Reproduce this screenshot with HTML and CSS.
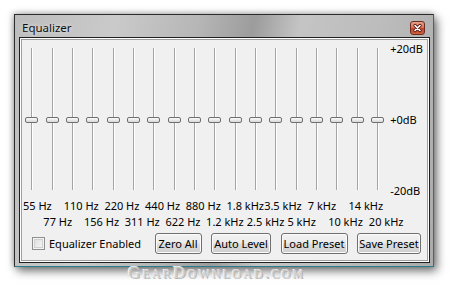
FILE: index.html
```html
<!DOCTYPE html>
<html>
<head>
<meta charset="utf-8">
<link rel="stylesheet" href="styles.css">
</head>
<body>
<div class="stage">
  <div class="window">
    <div class="titlebar">
      <span class="title">Equalizer</span>
      <span class="close">
        <svg width="13" height="12" viewBox="0 0 13 12">
          <path d="M4 3.5 L9 8.5 M9 3.5 L4 8.5" stroke="#5a1a10" stroke-width="3.2" stroke-linecap="round"/>
          <path d="M4 3.5 L9 8.5 M9 3.5 L4 8.5" stroke="#ffffff" stroke-width="1.6" stroke-linecap="round"/>
        </svg>
      </span>
    </div>
    <div class="client">
      <div class="eq">
        <div class="slider"><i class="track"></i><b class="thumb"></b></div>
        <div class="slider"><i class="track"></i><b class="thumb"></b></div>
        <div class="slider"><i class="track"></i><b class="thumb"></b></div>
        <div class="slider"><i class="track"></i><b class="thumb"></b></div>
        <div class="slider"><i class="track"></i><b class="thumb"></b></div>
        <div class="slider"><i class="track"></i><b class="thumb"></b></div>
        <div class="slider"><i class="track"></i><b class="thumb"></b></div>
        <div class="slider"><i class="track"></i><b class="thumb"></b></div>
        <div class="slider"><i class="track"></i><b class="thumb"></b></div>
        <div class="slider"><i class="track"></i><b class="thumb"></b></div>
        <div class="slider"><i class="track"></i><b class="thumb"></b></div>
        <div class="slider"><i class="track"></i><b class="thumb"></b></div>
        <div class="slider"><i class="track"></i><b class="thumb"></b></div>
        <div class="slider"><i class="track"></i><b class="thumb"></b></div>
        <div class="slider"><i class="track"></i><b class="thumb"></b></div>
        <div class="slider"><i class="track"></i><b class="thumb"></b></div>
        <div class="slider"><i class="track"></i><b class="thumb"></b></div>
        <div class="slider"><i class="track"></i><b class="thumb"></b></div>
        <div class="db">
          <span>+20dB</span>
          <span>+0dB</span>
          <span>-20dB</span>
        </div>
      </div>
      <div class="freqs">
        <span class="f c1">55 Hz</span>
        <span class="f c3">110 Hz</span>
        <span class="f c5">220 Hz</span>
        <span class="f c7">440 Hz</span>
        <span class="f c9">880 Hz</span>
        <span class="f c11">1.8 kHz</span>
        <span class="f c13 tight">3.5 kHz</span>
        <span class="f c15">7 kHz</span>
        <span class="f c17">14 kHz</span>
      </div>
      <div class="freqs">
        <span class="f c2">77 Hz</span>
        <span class="f c4">156 Hz</span>
        <span class="f c6">311 Hz</span>
        <span class="f c8">622 Hz</span>
        <span class="f c10">1.2 kHz</span>
        <span class="f c12">2.5 kHz</span>
        <span class="f c14">5 kHz</span>
        <span class="f c16">10 kHz</span>
        <span class="f c18">20 kHz</span>
      </div>
      <div class="controls">
        <label class="check"><span class="box"></span>Equalizer Enabled</label>
        <div class="buttons">
          <button class="btn w47">Zero All</button>
          <button class="btn w60">Auto Level</button>
          <button class="btn w67">Load Preset</button>
          <button class="btn w64">Save Preset</button>
        </div>
      </div>
    </div>
  </div>
  <div class="watermark">GearDownload.com</div>
</div>
</body>
</html>
```

FILE: styles.css
```css
html, body {
  margin: 0;
  padding: 0;
  background: #ffffff;
}
body {
  width: 452px;
  height: 286px;
  overflow: hidden;
  font-family: "Noto Sans", "Open Sans", sans-serif;
  font-size: 11px;
  color: #000;
}
.stage {
  position: relative;
  padding: 14px 0 0 14px;
  height: 272px;
}
.window {
  box-sizing: border-box;
  width: 420px;
  height: 253px;
  border: 1px solid #2c2c2c;
  border-right-color: #2d6f7c;
  border-bottom-color: #2a7d8c;
  background: linear-gradient(100deg, #bdbdbd 0%, #cacaca 22%, #b6b6b6 40%, #9c9c9c 52%, #c4c4c4 62%, #bcbcbc 80%, #ababab 100%);
  box-shadow: 3px 4px 9px rgba(0, 0, 0, 0.55), -1px -1px 6px rgba(0, 0, 0, 0.25);
  display: flex;
  flex-direction: column;
  padding: 0 3px 3px 4px;
}
.titlebar {
  height: 22px;
  display: flex;
  align-items: center;
  justify-content: space-between;
  padding: 0 5px 0 3px;
}
.title {
  font-size: 11.5px;
  color: #111;
  text-shadow: 0 0 4px rgba(255, 255, 255, 0.8);
  padding-top: 2px;
}
.close {
  box-sizing: border-box;
  width: 15px;
  height: 14px;
  margin-top: 3px;
  border: 1px solid #6e2a1e;
  border-radius: 3px;
  background: linear-gradient(#e8a08a 0%, #d6755c 45%, #c2452a 55%, #d0613f 100%);
  display: flex;
  align-items: center;
  justify-content: center;
}
.client {
  flex: 1;
  border: 1px solid #1f1f1f;
  box-shadow: inset 0 0 0 1px #ffffff, inset 0 0 0 2px #a0a0a0;
  background: #f0f0f0;
  padding: 4px 8px 0 2px;
}
.eq {
  display: grid;
  grid-template-columns: repeat(18, 20.35px) 1fr;
  height: 156px;
}
.slider {
  position: relative;
}
.track {
  display: block;
  box-sizing: border-box;
  width: 2px;
  height: 142px;
  margin: 6px auto 0;
  border-left: 1px solid #a4a4a4;
  border-right: 1px solid #ffffff;
}
.thumb {
  position: absolute;
  left: 50%;
  top: 75px;
  margin-left: -7px;
  box-sizing: border-box;
  width: 13px;
  height: 6px;
  border: 1px solid #6f6f6f;
  border-radius: 2px;
  background: linear-gradient(#fbfbfb, #d8d8d8);
}
.db {
  display: flex;
  flex-direction: column;
  justify-content: space-between;
  line-height: 14px;
  padding-left: 2px;
  white-space: nowrap;
}
.freqs {
  display: grid;
  grid-template-columns: repeat(18, 20.35px);
  height: 16px;
  line-height: 16px;
}
.f {
  white-space: nowrap;
  padding-left: 1px;
  grid-row: 1;
}
.tight {
  margin-left: -3px;
}
.c1 { grid-column: 1 / span 2; }
.c2 { grid-column: 2 / span 2; }
.c3 { grid-column: 3 / span 2; }
.c4 { grid-column: 4 / span 2; }
.c5 { grid-column: 5 / span 2; }
.c6 { grid-column: 6 / span 2; }
.c7 { grid-column: 7 / span 2; }
.c8 { grid-column: 8 / span 2; }
.c9 { grid-column: 9 / span 2; }
.c10 { grid-column: 10 / span 2; }
.c11 { grid-column: 11 / span 2; }
.c12 { grid-column: 12 / span 2; }
.c13 { grid-column: 13 / span 2; }
.c14 { grid-column: 14 / span 2; }
.c15 { grid-column: 15 / span 2; }
.c16 { grid-column: 16 / span 2; }
.c17 { grid-column: 17 / span 2; }
.c18 { grid-column: 18 / span 1; }
.controls {
  display: flex;
  align-items: center;
  height: 21px;
  margin-top: 3px;
}
.check {
  display: flex;
  align-items: center;
  gap: 4px;
  padding-left: 10px;
}
.box {
  box-sizing: border-box;
  width: 13px;
  height: 13px;
  border: 1px solid #8f8f8f;
  background: linear-gradient(135deg, #dcdcdc, #f8f8f8);
  box-shadow: inset 0 0 0 1px #f4f4f4, inset 0 0 0 2px #d0d0d0;
}
.buttons {
  margin-left: auto;
  display: flex;
  gap: 9.5px;
}
.btn {
  box-sizing: border-box;
  height: 21px;
  padding: 0;
  white-space: nowrap;
  font-family: inherit;
  font-size: 11px;
  color: #000;
  border: 1px solid #707070;
  border-radius: 3px;
  background: linear-gradient(#f2f2f2 0%, #ebebeb 48%, #dddddd 52%, #cfcfcf 100%);
  box-shadow: inset 0 0 0 1px #fbfbfb;
}
.w47 { width: 47px; }
.w60 { width: 60px; }
.w67 { width: 67px; }
.w64 { width: 64px; }
.watermark {
  position: absolute;
  left: 128px;
  top: 263px;
  font-family: "Liberation Serif", serif;
  font-variant: small-caps;
  font-size: 17px;
  letter-spacing: 2.2px;
  color: #d2d2d2;
  text-shadow: 1px 1px 0 #b2b2b2, -1px -1px 0 #f4f4f4;
}
```
